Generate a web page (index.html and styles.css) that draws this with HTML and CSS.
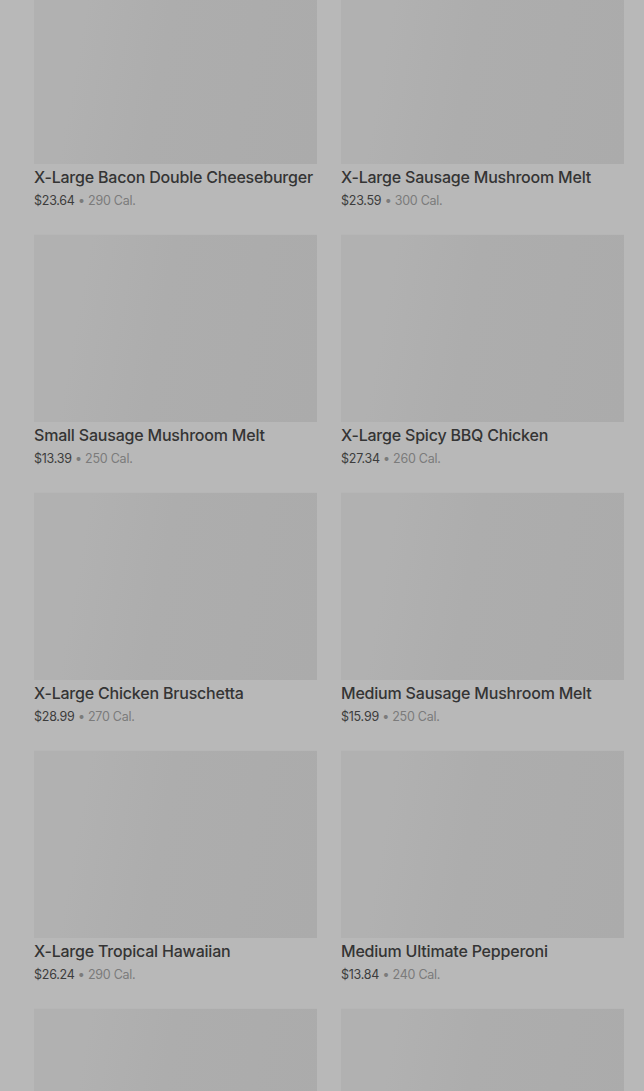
FILE: index.html
```html
<!DOCTYPE html>
<html lang="en">
<head>
    <meta charset="UTF-8">
    <meta name="viewport" content="width=device-width, initial-scale=1.0">
    <title>Menu</title>
    <link rel="stylesheet" href="styles.css">
</head>
<body>
    <div class="grid">
        <div class="item">
            <div class="thumb"></div>
            <h3>X-Large Bacon Double Cheeseburger</h3>
            <p class="meta">$23.64 <span>• 290 Cal.</span></p>
        </div>
        <div class="item">
            <div class="thumb"></div>
            <h3>X-Large Sausage Mushroom Melt</h3>
            <p class="meta">$23.59 <span>• 300 Cal.</span></p>
        </div>
        <div class="item">
            <div class="thumb"></div>
            <h3>Small Sausage Mushroom Melt</h3>
            <p class="meta">$13.39 <span>• 250 Cal.</span></p>
        </div>
        <div class="item">
            <div class="thumb"></div>
            <h3>X-Large Spicy BBQ Chicken</h3>
            <p class="meta">$27.34 <span>• 260 Cal.</span></p>
        </div>
        <div class="item">
            <div class="thumb"></div>
            <h3>X-Large Chicken Bruschetta</h3>
            <p class="meta">$28.99 <span>• 270 Cal.</span></p>
        </div>
        <div class="item">
            <div class="thumb"></div>
            <h3>Medium Sausage Mushroom Melt</h3>
            <p class="meta">$15.99 <span>• 250 Cal.</span></p>
        </div>
        <div class="item">
            <div class="thumb"></div>
            <h3>X-Large Tropical Hawaiian</h3>
            <p class="meta">$26.24 <span>• 290 Cal.</span></p>
        </div>
        <div class="item">
            <div class="thumb"></div>
            <h3>Medium Ultimate Pepperoni</h3>
            <p class="meta">$13.84 <span>• 240 Cal.</span></p>
        </div>
        <div class="item">
            <div class="thumb"></div>
        </div>
        <div class="item">
            <div class="thumb"></div>
        </div>
    </div>
</body>
</html>
```
FILE: styles.css
```css
* {
    margin: 0;
    padding: 0;
    box-sizing: border-box;
}

body {
    background-color: #b8b8b8;
    font-family: Inter, 'Noto Sans', sans-serif;
    overflow: hidden;
    height: 1091px;
}

.grid {
    display: grid;
    grid-template-columns: 283px 283px;
    column-gap: 24px;
    row-gap: 23px;
    padding: 0 20px 0 34px;
    margin-top: -24px;
}

.thumb {
    height: 188px;
    background: linear-gradient(100deg, #b1b1b1 0%, #b1b1b1 18%, #adadad 45%, #ababab 100%);
    border-top: 1px solid #b6b6b6;
}

.item h3 {
    font-size: 16px;
    font-weight: 500;
    line-height: 24px;
    letter-spacing: -0.2px;
    margin-top: 1px;
    color: #343434;
    white-space: nowrap;
}

.meta {
    font-size: 12.5px;
    line-height: 20px;
    letter-spacing: -0.25px;
    margin-top: 2px;
    color: #3c3c3c;
}

.meta span {
    color: #7b7b7b;
}
```
